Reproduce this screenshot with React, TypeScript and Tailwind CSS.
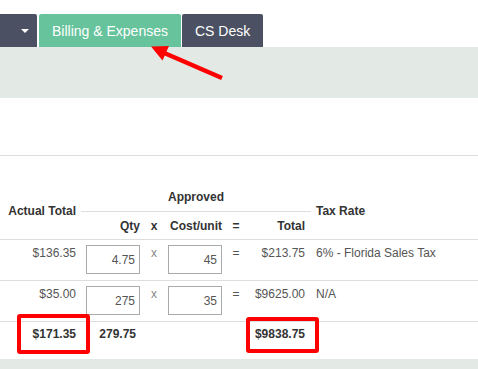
import React from "react";

const rows = [
    { actual: "$136.35", qty: "4.75", cost: "45", total: "$213.75", tax: "6% - Florida Sales Tax" },
    { actual: "$35.00", qty: "275", cost: "35", total: "$9625.00", tax: "N/A" },
];

export default function App() {
    return (
        <div
            className="relative flex min-h-[369px] w-full flex-col overflow-hidden bg-white text-[12px] leading-[16px] text-[#333]"
            style={{ fontFamily: '"Liberation Sans", Arial, sans-serif' }}
        >
            {/* tabs */}
            <div className="flex items-end pt-[14px] text-[14px] text-white">
                <div className="flex h-[33px] w-[37px] items-center justify-center rounded-tr-[2px] bg-[#4b5162] pl-[13px]">
                    <span className="h-0 w-0 border-x-[4px] border-t-[4px] border-x-transparent border-t-white" />
                </div>
                <div className="ml-[2px] flex h-[33px] items-center rounded-t-[2px] bg-[#66c39c] px-[13px] pt-px">
                    Billing &amp; Expenses
                </div>
                <div className="ml-px flex h-[33px] items-center rounded-t-[2px] bg-[#4b5162] px-[13px] pt-px">
                    CS Desk
                </div>
            </div>
            <div className="h-[51px] bg-[#e3e9e5]" />
            <div className="h-[58px] border-b border-[#ddd]" />

            {/* table header */}
            <div className="flex h-[84px] border-b border-[#ddd] font-bold">
                <div className="flex w-[81px] items-end justify-end pb-[20px] pr-[5px]">Actual Total</div>
                <div className="flex w-[230px] flex-col justify-end">
                    <div className="mb-[6px] text-center">Approved</div>
                    <div className="h-px bg-[#ddd]" />
                    <div className="flex h-[27px] items-center">
                        <div className="w-[65px] pr-[6px] text-right">Qty</div>
                        <div className="w-[16px] text-center">x</div>
                        <div className="w-[66px] pr-[6px] text-right">Cost/unit</div>
                        <div className="w-[16px] text-center">=</div>
                        <div className="w-[67px] pr-[6px] text-right">Total</div>
                    </div>
                </div>
                <div className="flex flex-1 items-end pb-[20px] pl-[5px]">Tax Rate</div>
            </div>

            {/* rows */}
            {rows.map((r) => (
                <div key={r.actual} className="flex h-[41px] border-b border-[#ddd] pt-[5px] text-[#555]">
                    <div className="w-[81px] pr-[5px] text-right">{r.actual}</div>
                    <div className="w-[65px] pl-[5px]">
                        <QtyInput value={r.qty} />
                    </div>
                    <div className="w-[16px] text-center text-[#888]">x</div>
                    <div className="w-[66px] pl-[6px]">
                        <QtyInput value={r.cost} />
                    </div>
                    <div className="w-[16px] text-center">=</div>
                    <div className="w-[67px] pr-[6px] text-right">{r.total}</div>
                    <div className="flex-1 pl-[5px]">{r.tax}</div>
                </div>
            ))}

            {/* totals */}
            <div className="flex h-[37px] pt-[4px] font-bold">
                <div className="w-[81px] pr-[5px] text-right">$171.35</div>
                <div className="w-[65px] pr-[10px] text-right">279.75</div>
                <div className="w-[98px]" />
                <div className="w-[67px] pr-[6px] text-right">$9838.75</div>
            </div>
            <div className="flex-1 bg-[#e3e9e5]" />

            {/* annotations */}
            <div className="pointer-events-none absolute left-[17px] top-[314px] h-[40px] w-[73px] rounded-[3px] border-[4px] border-[#f00]" />
            <div className="pointer-events-none absolute left-[246px] top-[317px] h-[36px] w-[73px] rounded-[3px] border-[4px] border-[#f00]" />
            <svg className="pointer-events-none absolute left-0 top-0" width="478" height="369">
                <line x1="222" y1="78" x2="162" y2="52" stroke="#f00" strokeWidth="4.5" />
                <polygon points="151,46.5 169,46 162.5,60.5" fill="#f00" />
            </svg>
        </div>
    );
}

function QtyInput({ value }: { value: string }) {
    return (
        <input
            readOnly
            value={value}
            className="block h-[29px] w-[54px] border border-[#aaa] bg-white pr-[4px] text-right text-[12px] text-[#555] outline-none"
        />
    );
}
